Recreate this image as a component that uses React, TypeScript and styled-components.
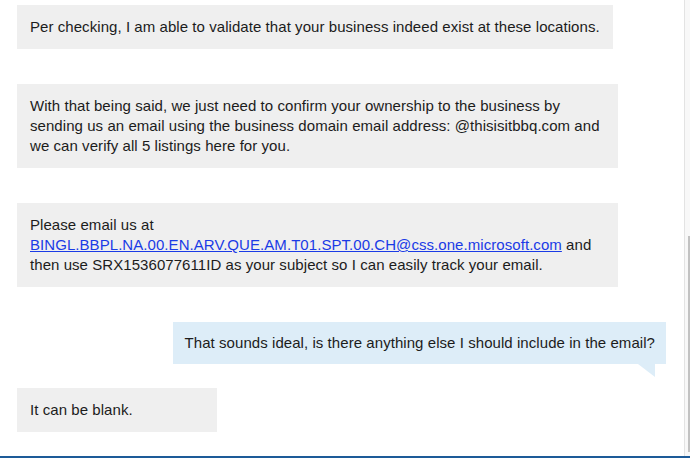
import React from "react";
import styled, { createGlobalStyle } from "styled-components";

const Global = createGlobalStyle`
  html, body { margin: 0; padding: 0; background: #ffffff; }
  body {
    font-family: "Liberation Sans", Arial, Helvetica, sans-serif;
    font-size: 15px;
    letter-spacing: 0.06px;
    color: #1c1c1c;
  }
`;

const Frame = styled.div`
  width: 690px;
  height: 458px;
  display: flex;
  flex-direction: column;
  overflow: hidden;
`;

const Body = styled.div`
  flex: 1;
  display: flex;
  min-height: 0;
`;

const Transcript = styled.div`
  flex: 1;
  display: flex;
  flex-direction: column;
  padding: 5px 18px 0 17px;
  min-width: 0;
`;

const Row = styled.div<{ $out?: boolean; $top: number }>`
  display: flex;
  justify-content: ${(p) => (p.$out ? "flex-end" : "flex-start")};
  margin-top: ${(p) => p.$top}px;
`;

const Bubble = styled.div<{ $out?: boolean }>`
  position: relative;
  box-sizing: border-box;
  max-width: 601px;
  min-width: 200px;
  line-height: 20px;
  padding: ${(p) => (p.$out ? "11px 11px 11px 12px" : "12px 13px 12px 13px")};
  background: ${(p) => (p.$out ? "#ddedf8" : "#efefef")};
`;

const Tail = styled.span`
  position: absolute;
  right: 11px;
  top: 100%;
  width: 0;
  height: 0;
  border-style: solid;
  border-width: 0 17px 13px 0;
  border-color: transparent #ddedf8 transparent transparent;
`;

const Link = styled.a`
  color: #1a3be6;
  text-decoration: underline;
`;

const Track = styled.div`
  width: 5px;
  border-left: 1px solid #e3e3e3;
  background: #f8f8f8;
  display: flex;
  flex-direction: column;
  padding-top: 236px;
  padding-bottom: 4px;
`;

const Thumb = styled.div`
  flex: 1;
  margin-left: 3px;
  background: #c2c2c2;
`;

const Rule = styled.div`
  height: 2px;
  background: #1d5b98;
`;

export default function App() {
  return (
    <Frame>
      <Global />
      <Body>
        <Transcript>
          <Row $top={0}>
            <Bubble>
              Per checking, I am able to validate that your business indeed exist at these locations.
            </Bubble>
          </Row>
          <Row $top={35}>
            <Bubble>
              With that being said, we just need to confirm your ownership to the business by sending us an
              email using the business domain email address: @thisisitbbq.com and we can verify all 5 listings
              here for you.
            </Bubble>
          </Row>
          <Row $top={35}>
            <Bubble>
              Please email us at{" "}
              <Link href="#">BINGL.BBPL.NA.00.EN.ARV.QUE.AM.T01.SPT.00.CH@css.one.microsoft.com</Link> and
              then use SRX1536077611ID as your subject so I can easily track your email.
            </Bubble>
          </Row>
          <Row $out $top={35}>
            <Bubble $out>
              That sounds ideal, is there anything else I should include in the email?
              <Tail />
            </Bubble>
          </Row>
          <Row $top={24}>
            <Bubble>It can be blank.</Bubble>
          </Row>
        </Transcript>
        <Track>
          <Thumb />
        </Track>
      </Body>
      <Rule />
    </Frame>
  );
}
